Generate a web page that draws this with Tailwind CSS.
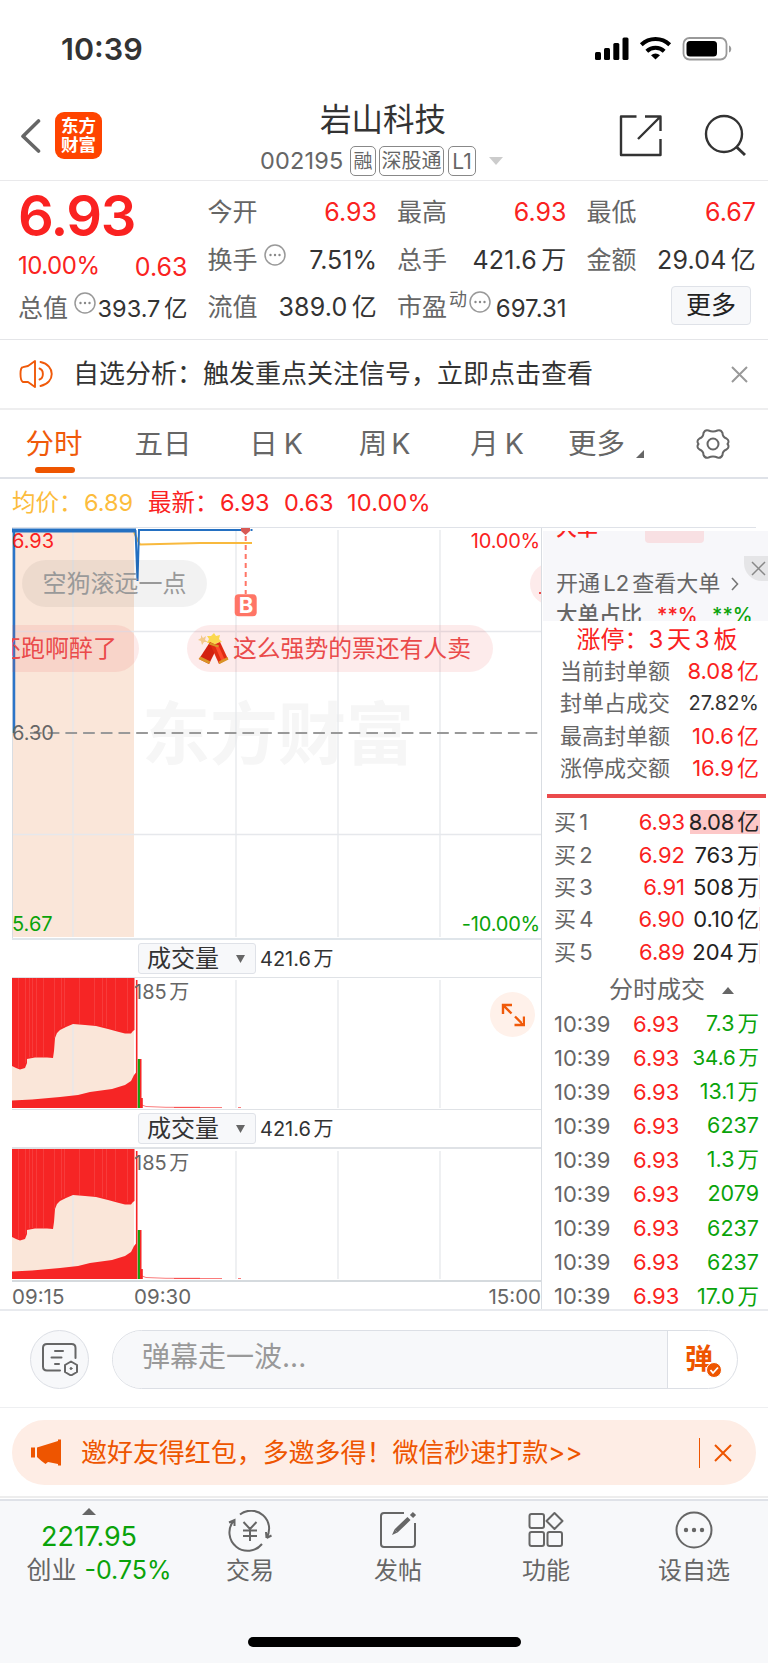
<!DOCTYPE html>
<html lang="zh-CN">
<head>
    <meta charset="UTF-8">
    <meta name="viewport" content="width=device-width, initial-scale=1.0">
    <title>岩山科技 002195</title>
    <script src="https://cdn.jsdelivr.net/npm/@tailwindcss/browser@4"></script>
</head>
<body class="w-[768px] h-[1663px] overflow-hidden bg-white font-['Inter','Noto_Sans_CJK_SC',sans-serif] text-[#333] leading-none whitespace-nowrap [word-spacing:-3px]">
    <!-- Status bar -->
    <div class="h-[98px] flex items-center justify-between pl-[61px] pr-[36px]">
        <span class="text-[30.500px] font-semibold">10:39</span>
        <svg class="w-[137px] h-6" viewBox="0 0 137 24">
            <g fill="#000">
                <rect x="0" y="15" width="6" height="8" rx="1.5"/>
                <rect x="9" y="11" width="6" height="12" rx="1.5"/>
                <rect x="18.300" y="6" width="6" height="17" rx="1.500"/>
                <rect x="27.500" y="0.500" width="6" height="22.500" rx="1.500"/>
                <path d="M60.500 22.500l-4.500-4.300a7 7 0 0 1 9 0z"/>
            </g>
            <g fill="none" stroke="#000" stroke-width="4">
                <path d="M46.300 7.800a20.500 20.500 0 0 1 28.400 0"/>
                <path d="M51.800 14.200a12.500 12.500 0 0 1 17.400 0"/>
            </g>
            <rect x="88.500" y="1" width="43" height="21.500" rx="6" fill="none" stroke="#999" stroke-width="1.800"/>
            <rect x="91.500" y="4" width="30.500" height="15.500" rx="3.500"/>
            <path d="M134 8.500v7c3-1 3-6 0-7z" fill="#999"/>
        </svg>
    </div>

    <!-- Title bar -->
    <header class="h-[83px] flex items-start border-b border-[#e9e9eb] pl-[20px]">
        <svg class="w-[21px] h-[36px] mt-[20px]" viewBox="0 0 21 36" fill="none" stroke="#666" stroke-width="3.600" stroke-linecap="round" stroke-linejoin="round"><path d="M18.500 3L3 18.200 18.500 33"/></svg>
        <div class="ml-[14px] mt-[14px] size-[47px] rounded-[9px] bg-[#ff4400] text-white font-bold text-[17.500px] flex flex-col items-center justify-center">
            <span class="h-[19px]">东方</span>
            <span class="h-[18px]">财富</span>
        </div>
        <div class="w-[281px] ml-[138px] flex flex-col items-center">
            <h1 class="h-[44px] flex items-center text-[31.500px] text-[#333] ml-[5px]">岩山科技</h1>
            <div class="flex items-center h-[38px] text-[#666] ml-[2px]">
                <span class="text-[23.500px] tracking-[0.200px] w-[90px]">002195</span>
                <span class="h-[30px] w-[26px] flex items-center justify-center border border-[#888] rounded-[5px] text-[19px]">融</span>
                <span class="ml-[3px] h-[30px] w-[65px] flex items-center justify-center border border-[#888] rounded-[5px] text-[20px]">深股通</span>
                <span class="ml-[4px] h-[30px] w-[28px] flex items-center justify-center border border-[#888] rounded-[5px] text-[21px]">L1</span>
                <svg class="ml-[13px] w-[14px] h-[8px]" viewBox="0 0 14 8" fill="#ccc"><path d="M0 0h14L7 8z"/></svg>
            </div>
        </div>
        <svg class="w-[43px] h-[43px] ml-[98px] mt-[16px]" viewBox="0 0 43 43" fill="none" stroke="#333" stroke-width="2.400" stroke-linejoin="round"><path d="M17.500 2.500H2v38.500h39.500V25M26 2.500h15.500V17M41 3L19 25"/></svg>
        <svg class="w-[42px] h-[43px] ml-[42px] mt-[16px]" viewBox="0 0 42 43" fill="none" stroke="#333" stroke-width="2.400"><circle cx="20" cy="20" r="18"/><path d="M32 32.500l9 8.500" stroke-width="3"/></svg>
    </header>

    <!-- Quote summary -->
    <section class="h-[159px] flex gap-[20px] pl-[18px] pr-[12px] pt-[8px] border-b border-[#e4e5e8] text-[25px]">
        <div class="flex-1 text-[#fa2221]">
            <div class="h-[54px] flex items-center text-[56px] font-semibold tracking-[-1.500px]">6.93</div>
            <div class="h-[46px] flex items-center justify-between text-[24px]"><span class="tracking-[-0.500px]">10.00%</span><span class="text-[25px] pt-[2px]">0.63</span></div>
            <div class="h-[38px] flex items-center justify-between">
                <span class="text-[#666]">总值</span>
                <div class="flex items-center">
                    <svg class="size-[22px] mb-[11px] mr-[2px]" viewBox="0 0 22 22" fill="#888"><circle cx="11" cy="11" r="10" fill="none" stroke="#999" stroke-width="1.500"/><circle cx="6.500" cy="11" r="1.200"/><circle cx="11" cy="11" r="1.200"/><circle cx="15.500" cy="11" r="1.200"/></svg>
                    <span class="text-[#333] text-[23.500px] pt-[2px]">393.7 亿</span>
                </div>
            </div>
        </div>
        <div class="flex-1 text-[#666]">
            <div class="h-[47.500px] flex items-center justify-between"><span>今开</span><span class="text-[#fa2221]">6.93</span></div>
            <div class="h-[47.500px] flex items-center">
                <span>换手</span>
                <svg class="size-[22px] mb-[11px] ml-[6px]" viewBox="0 0 22 22" fill="#888"><circle cx="11" cy="11" r="10" fill="none" stroke="#999" stroke-width="1.500"/><circle cx="6.500" cy="11" r="1.200"/><circle cx="11" cy="11" r="1.200"/><circle cx="15.500" cy="11" r="1.200"/></svg>
                <span class="ml-auto text-[#333]">7.51%</span>
            </div>
            <div class="h-[47.500px] flex items-center justify-between"><span>流值</span><span class="text-[#333] tracking-[0.200px]">389.0 亿</span></div>
        </div>
        <div class="flex-1 text-[#666]">
            <div class="h-[47.500px] flex items-center justify-between"><span>最高</span><span class="text-[#fa2221]">6.93</span></div>
            <div class="h-[47.500px] flex items-center justify-between"><span>总手</span><span class="text-[#333] tracking-[0.200px]">421.6 万</span></div>
            <div class="h-[47.500px] flex items-center">
                <span>市盈</span>
                <span class="text-[18px] mb-[16px] ml-[2px]">动</span>
                <svg class="size-[22px] mb-[11px] ml-[2px]" viewBox="0 0 22 22" fill="#888"><circle cx="11" cy="11" r="10" fill="none" stroke="#999" stroke-width="1.500"/><circle cx="6.500" cy="11" r="1.200"/><circle cx="11" cy="11" r="1.200"/><circle cx="15.500" cy="11" r="1.200"/></svg>
                <span class="ml-auto text-[#333] text-[24px] pt-[2px]">697.31</span>
            </div>
        </div>
        <div class="flex-1 text-[#666]">
            <div class="h-[47.500px] flex items-center justify-between"><span>最低</span><span class="text-[#fa2221]">6.67</span></div>
            <div class="h-[47.500px] flex items-center justify-between"><span>金额</span><span class="text-[#333] tracking-[0.200px]">29.04 亿</span></div>
            <button class="mt-[2px] ml-auto mr-[5px] w-[80px] h-[39px] flex items-center justify-center rounded-[4px] border border-[#dfe2e8] bg-[#f7f8fa] text-[#222]">更多</button>
        </div>
    </section>

    <!-- Analysis notice -->
    <section class="h-[70px] flex items-center border-b-2 border-[#eeeeef] pl-[19px] pr-[20px]">
        <svg class="w-[35px] h-[30px]" viewBox="0 0 35 30" fill="none" stroke="#f05a0a" stroke-width="1.900" stroke-linejoin="round" stroke-linecap="round"><path d="M16 2v26l-7-5H4q-2.500-1-2.500-8T4 8.200L9 7z"/><path d="M20.500 9.500c4.500 1.500 4.500 9.500 0 11M21.500 3c15 3 15 21 0 24"/></svg>
        <p class="ml-[19px] text-[26px] text-[#333]">自选分析：触发重点关注信号，立即点击查看</p>
        <svg class="ml-auto size-[17px]" viewBox="0 0 17 17" stroke="#999" stroke-width="2"><path d="M1 1l15 15M16 1L1 16"/></svg>
    </section>

    <!-- Period tabs -->
    <nav class="h-[69px] flex items-center border-b-2 border-[#dfe2e8] text-[28.500px] text-[#666]">
        <div class="w-[108px] h-full relative flex items-center justify-center text-[#f05a0a] pt-[2px]">分时<span class="absolute bottom-[4px] left-[35px] w-[40px] h-[6px] rounded-full bg-[#ee5500]"></span></div>
        <div class="w-[110px] flex justify-center pt-[2px]">五日</div>
        <div class="w-[116px] flex justify-center gap-[6px] pt-[2px]">日<span>K</span></div>
        <div class="w-[104px] flex justify-center gap-[4px] pr-[3px] pt-[2px]">周<span>K</span></div>
        <div class="w-[118px] flex justify-center gap-[6px] pt-[2px]">月<span>K</span></div>
        <div class="w-[84px] pl-[12px] pt-[2px]">更多</div>
        <svg class="w-[8px] h-[8px] ml-[-4px] mt-[20px]" viewBox="0 0 8 8" fill="#666"><path d="M8 0v8H0z"/></svg>
        <svg class="ml-auto mr-[38px] w-[34px] h-[32px]" viewBox="0 0 34 32" fill="none" stroke="#666" stroke-width="2" stroke-linejoin="round"><circle cx="17" cy="16" r="5.500"/><path d="M12.500 2.500Q17 4.500 21.500 2.500Q25 1.500 26.500 5Q26.500 9 30.500 10.500Q34 13 31.500 16Q34 19 30.500 21.500Q26.500 23 26.500 27Q25 30.500 21.500 29.500Q17 27.500 12.500 29.500Q9 30.500 7.500 27Q7.500 23 3.500 21.500Q0 19 2.500 16Q0 13 3.500 10.500Q7.500 9 7.500 5Q9 1.500 12.500 2.500Z"/></svg>
    </nav>

    <!-- Latest price line -->
    <div class="h-[49px] mx-[12px] flex items-center border-b border-[#dfe2e8] text-[23.500px] text-[#fa2221]">
        <span class="text-[#fcbc3c] w-[72px]">均价：</span><span class="text-[#fcbc3c] w-[64px]">6.89</span>
        <span class="w-[72px]">最新：</span><span class="w-[64px]">6.93</span><span class="w-[63px]">0.63</span><span class="tracking-[0.200px]">10.00%</span>
    </div>

    <main class="h-[783px] flex border-b-2 border-[#e8eaee] pl-[12px]">
        <!-- Charts -->
        <div class="w-[530px] border-r border-[#d9dde2]">
            <div class="relative h-[412px] overflow-hidden border-b-2 border-[#dfe5ea] text-[20px]">
                <div class="absolute left-[130px] top-[172px] text-[68px] font-bold text-[#f6f6f6]">东方财富</div>
                <svg class="absolute inset-0 w-[529px] h-[411px]" viewBox="0 0 529 411" fill="none">
                    <rect x="0" y="2" width="122" height="407" fill="#fae6d9"/>
                    <path d="M61 2v407M224 2v407M326 2v407M428 2v407M0 103.500h529M0 306.500h529" stroke="#e6e8ec" stroke-width="1.300"/>
                    <path d="M0.500 0v411" stroke="#d9dde2"/>
                    <path d="M18 205H529" stroke="#999" stroke-width="1.800" stroke-dasharray="11.700 6"/>
                    <path d="M122 4l3 7 3 5.500 60-1.500h52" stroke="#f8b93e" stroke-width="2"/>
                    <path d="M2 205V2.500" stroke="#2b74c8" stroke-width="2.500"/>
                    <path d="M0 2.500h124" stroke="#2470c2" stroke-width="4"/>
                    <path d="M123.500 2l2 51 1.500-51h111M238.500 2h2" stroke="#2470c2" stroke-width="2"/>
                    <path d="M229 0h9v3l-4.500 4L229 3z" fill="#d75a55"/>
                    <path d="M233.700 8v58" stroke="#ff7566" stroke-width="2" stroke-dasharray="5 4"/>
                    <rect x="222.700" y="66.300" width="22" height="22" rx="4" fill="#ff7566"/>
                </svg>
                <div class="absolute left-[223px] top-[66px] w-[22px] h-[22px] flex items-center justify-center text-white font-bold text-[22px]">B</div>
                <span class="absolute left-0 top-[3px] text-[#fa2221]">6.93</span>
                <span class="absolute right-[1px] top-[3px] text-[#fa2221] tracking-[-0.200px]">10.00%</span>
                <span class="absolute left-0 top-[195px] text-[#666]">6.30</span>
                <span class="absolute left-0 top-[386px] text-[#0aa30a]">5.67</span>
                <span class="absolute right-[1px] top-[386px] text-[#0aa30a] tracking-[-0.200px]">-10.00%</span>
                <!-- Bullet comments -->
                <div class="absolute left-[10px] top-[32px] w-[185px] h-[47px] rounded-full bg-black/5 text-[#999] text-[24px] flex items-center justify-center">空狗滚远一点</div>
                <div class="absolute right-[402px] top-[97px] w-[190px] h-[47px] rounded-full bg-[#eb4646]/11 text-[#ea4a4a] text-[24px] flex items-center justify-end pr-[22px]">还跑啊醉了</div>
                <div class="absolute left-[175px] top-[97px] w-[306px] h-[47px] rounded-full bg-[#eb4646]/11 text-[#ea4a4a] text-[23.800px] flex items-center pl-[10px]">
                    <svg class="w-[32px] h-[32px] mr-[4px]" viewBox="0 0 32 32">
                        <path d="M4 2l2 3 3-2-1 4 3 2-4 0-2 3-1-4-3-1 3-2z" fill="#f3c98a"/>
                        <path d="M17 0l2 3 4-1-1 4 3 3-5 1-3 3-3-3-4 0 2-4-2-3 4 0z" fill="#fbd84e"/>
                        <path d="M13 9l8 4-9 18-10-5z" fill="#d3200f"/>
                        <path d="M14 13l9-4 8 17-9 5z" fill="#e02b12"/>
                        <path d="M18 13l3-1.500 7 16-3 1.500z" fill="#ff4a2c"/>
                        <path d="M3.500 23.500l10 5-1.500 2.500-10.500-5zM21.500 28.500l9-4.500 1 2.500-9 4.500zM13 9.500l9 3-1 2-9-3z" fill="#d99427"/>
                    </svg>
                    这么强势的票还有人卖
                </div>
                <div class="absolute left-[518px] top-[35px] w-[60px] h-[42px] rounded-full bg-[#eb4646]/11"></div>
                <span class="absolute left-[527px] top-[64px] w-[3px] h-[2px] bg-[#ea4a4a]"></span>
            </div>

            <div class="indicator h-[38px] flex items-center border-b border-[#dfe2e6]"></div>
            <div class="volume relative h-[132px] border-b border-[#dfe2e6]"></div>
            <div class="indicator h-[39px] flex items-center border-b-2 border-[#dfe2e6]"></div>
            <div class="volume relative h-[133px] border-b-2 border-[#d5dade]"></div>
            <div class="h-[27px] flex items-center text-[20.500px] text-[#666] pt-[3px]"><span class="w-[122px]">09:15</span><span>09:30</span><span class="ml-auto">15:00</span></div>
        </div>

        <!-- Order book -->
        <aside class="flex-1 text-[22px] text-[#666]">
            <div class="relative mt-[3px] ml-px h-[90px] overflow-hidden bg-[#f7f7fa]">
                <div class="h-[12px] overflow-hidden pl-[13px] flex items-end"><span class="text-[21px] font-medium text-[#fa2221] mb-[5px]">大单</span><i class="block ml-[47px] w-[59px] h-[12px] bg-[#f8e0e3] rounded-b-sm"></i></div>
                <div class="mt-[27px] h-[26px] pl-[13px] flex items-center"><span>开通 L2 查看大单</span><svg class="ml-[11px] mt-[2px] w-[8px] h-[14px]" viewBox="0 0 8 14" fill="none" stroke="#777" stroke-width="1.600"><path d="M1 1l5.500 6L1 13"/></svg></div>
                <div class="mt-[8px] h-[22px] pl-[13px] flex items-center font-medium"><span class="w-[101px] text-[21.500px]">大单占比</span><span class="w-[55px] text-[#fa2221] text-[20px]">**%</span><span class="text-[#0aa30a] text-[20px]">**%</span></div>
                <div class="absolute right-0 top-[25px] w-[24px] h-[25px] rounded-bl-[18px] bg-[#e5e5e7] flex items-center justify-center pl-[5px]"><svg class="size-[15px]" viewBox="0 0 15 15" stroke="#888" stroke-width="1.500"><path d="M1 1l13 13M14 1L1 14"/></svg></div>
            </div>
            <div class="h-[34px] flex items-center justify-center pt-[3px] text-[24px] text-[#fa2221] pl-[4px]">涨停：3 天 3 板</div>
            <div id="limitRows" class="pl-[18px] pr-[9px]"></div>
            <div class="mt-[10px] ml-[5px] mr-[2px] h-[4px] bg-[#eb4a4c]"></div>
            <div id="bidRows" class="mt-[8px] pl-[12px] pr-[8px]"></div>
            <div class="h-[39px] flex items-center pt-[6px] pl-[67px] text-[24px]">分时成交<svg class="ml-[17px] w-[12px] h-[7px]" viewBox="0 0 12 7" fill="#666"><path d="M6 0l6 7H0z"/></svg></div>
            <div id="tradeRows" class="h-[302px] overflow-hidden pl-[12px] pr-[9px]"></div>
        </aside>
    </main>

    <!-- Comment input -->
    <section class="h-[97px] flex items-center border-b border-[#eeeff1] px-[30px]">
        <div class="size-[59px] rounded-full border border-[#dcdfe5] bg-[#f7f8fa] flex items-center justify-center">
            <svg class="w-[38px] h-[34px]" viewBox="0 0 38 34" fill="none" stroke="#666" stroke-width="2" stroke-linecap="round"><path d="M34.500 16V6q0-4-4-4H6Q2 2 2 6v18.500q0 4 4 4h13"/><path d="M14 9h8M10.500 15.500h10M14 22h4"/><path d="M30 19.500l6 3.500v7l-6 3.500-6-3.500v-7z" stroke-linejoin="round"/><circle cx="30" cy="26.500" r="1" fill="#666" stroke-width="1"/></svg>
        </div>
        <div class="ml-[23px] flex-1 h-[59px] flex rounded-full border border-[#dcdfe5] overflow-hidden">
            <div class="flex-1 flex items-center bg-[#f7f8fa] pl-[29px] pb-[4px] text-[28px] text-[#999]">弹幕走一波...</div>
            <div class="relative w-[70px] border-l border-[#dcdfe5] pl-[17px] flex items-center text-[28px] font-bold text-[#ee5500]">弹<svg class="absolute left-[38px] top-[31px] size-[16px]" viewBox="0 0 16 16"><circle cx="8" cy="8" r="7.500" fill="#ee5500" stroke="#fff"/><path d="M4.500 8l2.500 3 5-5.500" fill="none" stroke="#fff" stroke-width="1.800"/></svg></div>
        </div>
    </section>

    <!-- Invite banner -->
    <section class="h-[90px] pt-[12px] px-[12px] border-b-2 border-[#ededed]">
        <div class="h-[65px] rounded-full bg-[#feede5] flex items-center pl-[19px] pr-[24px] text-[#ee5500]">
            <svg class="w-[31px] h-[27px]" viewBox="0 0 31 27" fill="#ee5500"><path d="M0 8.500h4v10H0zM6 8.500L27 2V0.500h3v26h-3v-1.500l-10-2-2.500 2-4-3L6 18z"/></svg>
            <p class="ml-[19px] text-[26px] tracking-[-0.050px]">邀好友得红包，多邀多得！微信秒速打款&gt;&gt;</p>
            <i class="ml-auto block w-[1.500px] h-[30px] bg-[#ee5500]"></i>
            <svg class="ml-[14px] size-[18px]" viewBox="0 0 18 18" stroke="#ee5500" stroke-width="2"><path d="M1 1l16 16M17 1L1 17"/></svg>
        </div>
    </section>

    <!-- Bottom bar -->
    <footer class="relative h-[165px] mt-px border-t-2 border-[#dfe2e8] bg-[#f7f8fa] flex text-[24px] text-[#666]">
        <div class="w-[176px] pl-[2px] flex flex-col items-center">
            <svg class="mt-[7px] w-[14px] h-[7px]" viewBox="0 0 14 7" fill="#666"><path d="M7 0l7 7H0z"/></svg>
            <div class="mt-[8px] text-[27px]  text-[#0aa30a] tracking-[-0.100px]">2217.95</div>
            <div class="mt-[8px] pl-[20px] flex items-center text-[25px]">创业<span class="ml-[8px] text-[#0aa30a]">-0.75%</span></div>
        </div>
        <div class="w-[148px] flex flex-col items-center">
            <svg class="mt-[9px] w-[44px] h-[42px]" viewBox="0 0 44 42" fill="none" stroke="#666" stroke-width="2"><path d="M12 4.500A18 18 0 0 1 38.500 28M38.500 28l5-2.500M38.500 28l-.5-6M34 34A18 18 0 0 1 5.500 11M1 12.500l5.500-2.500v6M15.500 12l6.500 7 6.500-7M22 19v12M15 20.500h14M15 26h14"/></svg>
            <span class="mt-[7px]">交易</span>
        </div>
        <div class="w-[148px] flex flex-col items-center">
            <svg class="mt-[9px] w-[38px] h-[42px]" viewBox="0 0 38 42" fill="none" stroke="#666" stroke-width="2"><path d="M25 3H5Q2 3 2 6v28q0 3 3 3h28q3 0 3-3V13"/><path d="M32.500 6.500l3-3M30 8.500L17 21" stroke-width="4.500"/><path d="M15.500 19.500L13 25l5.500-2.500z" fill="#666" stroke="none"/></svg>
            <span class="mt-[7px]">发帖</span>
        </div>
        <div class="w-[148px] flex flex-col items-center">
            <svg class="mt-[9px] w-[36px] h-[42px]" viewBox="0 0 36 42" fill="none" stroke="#666" stroke-width="2" stroke-linejoin="round"><rect x="1.500" y="4" width="14.500" height="14" rx="2"/><rect x="1.500" y="22" width="14.500" height="14" rx="2"/><rect x="19.500" y="22" width="14.500" height="14" rx="2"/><path d="M26.500 3l8 8-8 8-8-8z"/></svg>
            <span class="mt-[7px]">功能</span>
        </div>
        <div class="w-[148px] flex flex-col items-center">
            <svg class="mt-[9px] w-[38px] h-[42px]" viewBox="0 0 38 42" fill="#666"><circle cx="19" cy="20" r="17.500" fill="none" stroke="#666" stroke-width="2"/><circle cx="11" cy="20" r="2.200"/><circle cx="19" cy="20" r="2.200"/><circle cx="27" cy="20" r="2.200"/></svg>
            <span class="mt-[7px]">设自选</span>
        </div>
        <div class="absolute left-[248px] bottom-[17px] w-[273px] h-[10px] rounded-full bg-black"></div>
    </footer>

    <script>
        document.querySelectorAll('.indicator').forEach(el => {
            el.innerHTML = `
                <div class="ml-[126px] w-[118px] h-[31px] flex items-center justify-between pl-[8px] pr-[10px] rounded-[3px] border border-[#dfe2e8] bg-[#f7f8fa] text-[24px] text-[#333]">成交量
                    <svg class="w-[9px] h-[8px]" viewBox="0 0 9 8" fill="#666"><path d="M0 0h9L4.500 8z"/></svg>
                </div>
                <span class="ml-[4px] text-[20px] text-[#333]">421.6 万</span>`;
        });

        document.querySelectorAll('.volume').forEach((el, i) => {
            el.innerHTML = `
                <svg class="absolute inset-0 w-[529px] h-[131px]" viewBox="0 0 529 131" fill="none">
                    <rect width="122" height="130" fill="#fae6d9"/>
                    <path d="M61 2v128M224 2v128M326 2v128M428 2v128" stroke="#e6e8ec" stroke-width="1.300"/>
                    <path d="M0 0H122.500V52L121 53 119 55.500H113L107 54 96 51 84 48 73 47 61 46 54 49 48 52 45 55 43 60 42 73 41 80 35 79.500H23L15 81V85L13 90 8 91.500 4 90 0 88Z" fill="#f62525"/>
                    <path d="M0 130V122.500L20 121.500 48 119 66 117 78 114 100 111 113 107 119 103 122 97 124.500 94V130Z" fill="#f62525"/>
                    <path d="M6.500 0v90M13.500 0v85M17.500 0v79M20.500 0v79M24.500 0v79M31.500 0v79M42.500 0v60M49.500 0v49M52.500 0v48M67.500 0v46M82.500 0v47M90.500 0v48M94.500 0v49M103.500 0v52M115.500 0v53" stroke="#fff" stroke-opacity=".1"/>
                    <path d="M124.700 2v128" stroke="#f62525" stroke-width="1.600"/>
                    <path d="M127 81v49" stroke="#12a30f" stroke-width="2.400"/>
                    <path d="M128.700 81v49M130 120v10" stroke="#f62525" stroke-width="1.600"/>
                    <path d="M130 127l4 1.500 20 .8h34M162 129.500h48M226 129.500h3" stroke="#f62525" stroke-opacity=".6"/>
                </svg>
                <span class="absolute left-[122px] top-[4px] text-[20px] text-[#666]">185 万</span>
                ${i === 0 ? `<div class="absolute left-[478px] top-[14px] size-[45px] rounded-full bg-[#fff1ea] flex items-center justify-center">
                    <svg class="size-[24px]" viewBox="0 0 24 24" fill="none" stroke="#f05a0a" stroke-width="2.400"><path d="M2 11V2h9M2 2l8.500 8.500M23 13.500V22h-9.500M22.500 22L14 13.500"/></svg>
                </div>` : ''}`;
        });

        const limits = [
            ['当前封单额', '8.08 亿', 'text-[#fa2221]'],
            ['封单占成交', '27.82%', 'text-[#333] text-[20px]'],
            ['最高封单额', '10.6 亿', 'text-[#fa2221]'],
            ['涨停成交额', '16.9 亿', 'text-[#fa2221]'],
        ];
        document.getElementById('limitRows').innerHTML = limits.map(r =>
            `<div class="h-[32.300px] flex items-center justify-between"><span>${r[0]}</span><span class="${r[2]}">${r[1]}</span></div>`
        ).join('');

        const bids = [['1', '6.93', '8.08 亿'], ['2', '6.92', '763 万'], ['3', '6.91', '508 万'], ['4', '6.90', '0.10 亿'], ['5', '6.89', '204 万']];
        document.getElementById('bidRows').innerHTML = bids.map((r, i) => `
            <div class="h-[32.300px] flex items-center">
                <span class="w-[60px]">买 ${r[0]}</span>
                <span class="w-[71px] text-right text-[#fa2221]">${r[1]}</span>
                <span class="ml-auto h-[24px] flex items-center justify-end text-[#222] ${i === 0 ? 'w-[70px] bg-[#fdc8c8] pr-px tracking-[-0.200px]' : 'w-[74px] border-r border-[#fde0e0]'}">${r[2]}</span>
            </div>`
        ).join('');

        const trades = ['7.3 万', '34.6 万', '13.1 万', '6237', '1.3 万', '2079', '6237', '6237', '17.0 万'];
        document.getElementById('tradeRows').innerHTML = trades.map(v => `
            <div class="h-[34.100px] flex items-center">
                <span class="w-[79px]">10:39</span>
                <span class="text-[#fa2221]">6.93</span>
                <span class="ml-auto text-[#0aa30a] ${v === '34.6 万' ? 'text-[20.500px]' : 'text-[21.500px]'}">${v}</span>
            </div>`
        ).join('');
    </script>
</body>
</html>
